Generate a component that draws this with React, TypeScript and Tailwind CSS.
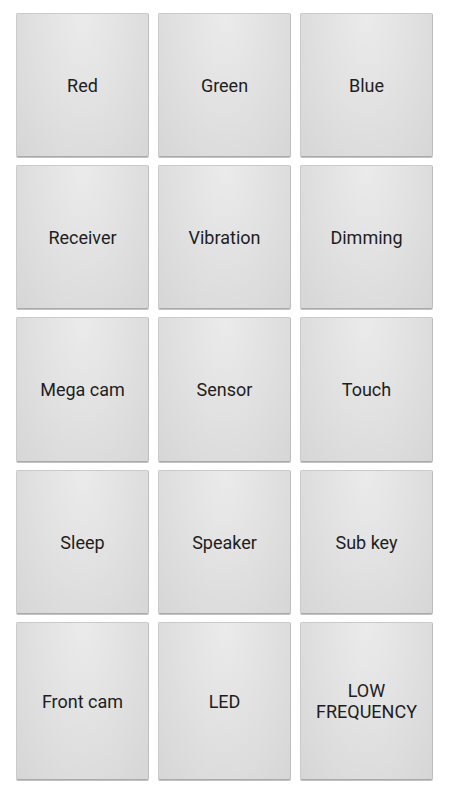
const rows: { labels: string[]; h: string }[] = [
  { labels: ['Red', 'Green', 'Blue'], h: 'h-[144px]' },
  { labels: ['Receiver', 'Vibration', 'Dimming'], h: 'h-[144px]' },
  { labels: ['Mega cam', 'Sensor', 'Touch'], h: 'h-[145px]' },
  { labels: ['Sleep', 'Speaker', 'Sub key'], h: 'h-[144px]' },
  { labels: ['Front cam', 'LED', 'LOW\nFREQUENCY'], h: 'h-[158px]' },
]

function TestButton({ label, h }: { label: string; h: string }) {
  return (
    <button
      className={`${h} flex items-center justify-center rounded-[2px] border border-[#cacaca] border-b-[#a9a9a9] border-r-[#bdbdbd] bg-[radial-gradient(ellipse_at_50%_0%,#ebebeb_0%,#e2e2e2_45%,#d6d6d6_100%)] shadow-[0_1px_0_#c2c2c2] text-[18px] leading-[21px] text-[#1e1e1e] whitespace-pre-line text-center`}
    >
      {label}
    </button>
  )
}

export default function App() {
  return (
    <div className="w-[450px] h-[800px] bg-white font-['Roboto','Liberation_Sans',sans-serif] pt-[13px] pl-[16px] pr-[17px]">
      <div className="grid grid-cols-3 gap-x-[9px] gap-y-[8px]">
        {rows.map(row =>
          row.labels.map(label => <TestButton key={label} label={label} h={row.h} />)
        )}
      </div>
    </div>
  )
}
